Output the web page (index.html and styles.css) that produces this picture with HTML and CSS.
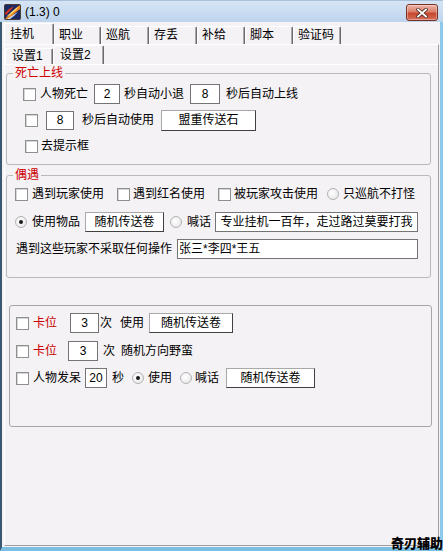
FILE: index.html
```html
<!DOCTYPE html>
<html lang="zh-CN">
<head>
<meta charset="utf-8">
<title>(1.3) 0</title>
<link rel="stylesheet" href="styles.css">
</head>
<body>
<div class="window">
  <div class="titlebar">
    <svg class="app-icon" width="17" height="16" viewBox="0 0 17 16">
      <rect x="0.5" y="0.5" width="16" height="15" rx="1" fill="#1b2a66" stroke="#4b3b30"/>
      <path d="M1 15 L7 9 L12 4 L16 1 L16 5 L11 9 L5 15 Z" fill="#f08a1a"/>
      <path d="M2 13 L8 7.5 L15 2 L12 6 L6 11 Z" fill="#ffe27a"/>
      <path d="M1 9 L5 5 L10 2 L7 6 L2 11 Z" fill="#d8321e"/>
      <path d="M3 15 L9 11 L14 8 L10 12 L6 15 Z" fill="#c9d8f0"/>
    </svg>
    <span class="title">(1.3) 0</span>
    <div class="close">
      <svg width="12" height="10" viewBox="0 0 12 10">
        <path d="M2 1.5 L10 8.5 M10 1.5 L2 8.5" stroke="#4a2a26" stroke-width="3.4" stroke-linecap="square"/>
        <path d="M2 1.5 L10 8.5 M10 1.5 L2 8.5" stroke="#ffffff" stroke-width="1.8" stroke-linecap="square"/>
      </svg>
    </div>
  </div>
  <div class="frame">
    <div class="tabs">
      <div class="tab active w50">挂机</div>
      <div class="tab w47">职业</div>
      <div class="tab w48">巡航</div>
      <div class="tab w48">存丢</div>
      <div class="tab w48">补给</div>
      <div class="tab w48">脚本</div>
      <div class="tab w48">验证码</div>
    </div>
    <div class="panel">
      <div class="subtabs">
        <div class="subtab w48">设置1</div>
        <div class="subtab active w51">设置2</div>
      </div>
      <div class="subpanel">
        <fieldset class="group g1">
          <legend>死亡上线</legend>
          <div class="row">
            <span class="cb ml16"></span>
            <span class="lbl ml4">人物死亡</span>
            <span class="edit w26 ml6">2</span>
            <span class="lbl ml4">秒自动小退</span>
            <span class="edit w30 ml6">8</span>
            <span class="lbl ml6">秒后自动上线</span>
          </div>
          <div class="row gap6">
            <span class="cb ml18"></span>
            <span class="edit w28 h19 ml8">8</span>
            <span class="lbl ml8">秒后自动使用</span>
            <span class="btn w95 h21 ml7">盟重传送石</span>
          </div>
          <div class="row gap6">
            <span class="cb ml18"></span>
            <span class="lbl ml3">去提示框</span>
          </div>
        </fieldset>

        <fieldset class="group g2">
          <legend>偶遇</legend>
          <div class="row">
            <span class="cb ml8"></span>
            <span class="lbl ml4">遇到玩家使用</span>
            <span class="cb ml13"></span>
            <span class="lbl ml3">遇到红名使用</span>
            <span class="cb ml13"></span>
            <span class="lbl ml3">被玩家攻击使用</span>
            <span class="rb ml9"></span>
            <span class="lbl ml4">只巡航不打怪</span>
          </div>
          <div class="row gap8">
            <span class="rb on ml8"></span>
            <span class="lbl ml5">使用物品</span>
            <span class="btn w79 ml5">随机传送卷</span>
            <span class="rb ml6"></span>
            <span class="lbl ml5">喊话</span>
            <span class="edit w203 ml4">专业挂机一百年，走过路过莫要打我</span>
          </div>
          <div class="row gap7">
            <span class="lbl ml9">遇到这些玩家不采取任何操作</span>
            <span class="edit left w241 ml5">张三*李四*王五</span>
          </div>
        </fieldset>

        <fieldset class="group g3">
          <div class="row">
            <span class="cb ml6"></span>
            <span class="lbl red ml4">卡位</span>
            <span class="edit w29 ml13">3</span>
            <span class="lbl ml1">次</span>
            <span class="lbl ml8">使用</span>
            <span class="btn w84 ml5">随机传送卷</span>
          </div>
          <div class="row gap8">
            <span class="cb ml6"></span>
            <span class="lbl red ml4">卡位</span>
            <span class="edit w30 ml11">3</span>
            <span class="lbl ml5">次</span>
            <span class="lbl ml6">随机方向野蛮</span>
          </div>
          <div class="row gap7">
            <span class="cb ml6"></span>
            <span class="lbl ml4">人物发呆</span>
            <span class="edit w22 ml4">20</span>
            <span class="lbl ml5">秒</span>
            <span class="rb on ml8"></span>
            <span class="lbl ml4">使用</span>
            <span class="rb ml8"></span>
            <span class="lbl ml3">喊话</span>
            <span class="btn w89 ml7">随机传送卷</span>
          </div>
        </fieldset>
      </div>
    </div>
  </div>
  <div class="brand">奇刃辅助</div>
</div>
</body>
</html>
```

FILE: styles.css
```css
* { box-sizing: border-box; }
html, body { margin: 0; padding: 0; }
body {
  width: 443px;
  height: 551px;
  overflow: hidden;
  font-family: "Liberation Sans", "Noto Sans CJK SC", sans-serif;
  font-size: 12px;
  color: #000;
  background: #f5f2f5;
}
.window {
  position: relative;
  width: 443px;
  height: 551px;
  display: flex;
  flex-direction: column;
}

/* title bar */
.titlebar {
  height: 22px;
  flex: none;
  display: flex;
  align-items: center;
  padding-left: 4px;
  background: linear-gradient(#d6e5f5, #bed4ed);
  border-top: 1px solid #a9c0d8;
}
.app-icon { flex: none; }
.title { margin-left: 4px; font-size: 12px; line-height: 14px; }
.close {
  margin-left: auto;
  margin-right: 5px;
  align-self: flex-start;
  margin-top: 3px;
  width: 32px;
  height: 17px;
  border: 1px solid #7a2f24;
  border-radius: 3px;
  background: linear-gradient(#eeb7a9, #da8069 45%, #c6472e 55%, #d4705a);
  box-shadow: inset 0 0 0 1px rgba(255, 255, 255, 0.35);
  display: flex;
  align-items: center;
  justify-content: center;
}

/* window frame */
.frame {
  flex: 1;
  display: flex;
  flex-direction: column;
  border-left: 2px solid #3a5870;
  border-right: 3px solid #8dc9ea;
  border-bottom: 4px solid #7dbfe3;
  padding-bottom: 1px;
  background: #f5f2f5;
}

/* main tabs */
.tabs {
  height: 22px;
  flex: none;
  display: flex;
  align-items: flex-end;
  padding-left: 2px;
}
.tab {
  height: 18px;
  flex: none;
  padding-left: 4px;
  line-height: 16px;
  white-space: nowrap;
  background: #f5f2f5;
  border-top: 1px solid #fff;
  border-left: 1px solid #fff;
  border-right: 1px solid #6a6a6a;
  border-radius: 2px 2px 0 0;
  box-shadow: inset -1px 0 0 #a9a9a9;
}
.tab.active {
  height: 22px;
  margin-bottom: -1px;
  padding-left: 5px;
  line-height: 21px;
}

.panel {
  flex: 1;
  display: flex;
  flex-direction: column;
  margin: 0 1px 0 2px;
  border: 1px solid;
  border-color: #fff #a0a0a0 #a0a0a0 #fff;
}

/* sub tabs */
.subtabs {
  height: 19px;
  flex: none;
  display: flex;
  align-items: flex-end;
}
.subtab {
  height: 16px;
  flex: none;
  padding-left: 6px;
  line-height: 15px;
  white-space: nowrap;
  background: #f5f2f5;
  border-top: 1px solid #fff;
  border-left: 1px solid #fff;
  border-right: 1px solid #6a6a6a;
  border-radius: 2px 2px 0 0;
  box-shadow: inset -1px 0 0 #a9a9a9;
}
.subtab.active {
  height: 20px;
  margin-bottom: -1px;
  line-height: 19px;
}
.subpanel {
  flex: 1;
  border-top: 1px solid #fff;
}

/* group boxes */
.group {
  min-width: 0;
  border: 1px solid #b9b9b9;
  border-radius: 3px;
  padding: 0;
}
.group legend {
  margin-left: 6px;
  padding: 0 2px;
  line-height: 14px;
  color: #cc0000;
}
.g1 { margin: 1px 7px 0 1px; padding: 4px 0 8px 0; }
.g2 { margin: 3px 7px 0 1px; padding: 2px 0 18px 0; }
.g3 { margin: 27px 6px 0 4px; padding: 7px 0 38px 0; border-color: #a6a6a6; }

.row {
  height: 20px;
  display: flex;
  align-items: center;
}
.gap6 { margin-top: 6px; }
.gap7 { margin-top: 7px; }
.gap8 { margin-top: 8px; }

.lbl { white-space: nowrap; line-height: 14px; flex: none; }
.red { color: #cc0000; }

.cb {
  width: 13px;
  height: 13px;
  flex: none;
  border: 1px solid #8e8f8f;
  background: #fff;
  box-shadow: inset 1px 1px 0 #d6d6d6;
}
.rb {
  width: 12px;
  height: 12px;
  flex: none;
  border-radius: 50%;
  border: 1px solid #b4b4b4;
  background: radial-gradient(circle at 40% 40%, #ffffff, #e2e2e2);
  display: flex;
  align-items: center;
  justify-content: center;
}
.rb.on::after {
  content: "";
  width: 4px;
  height: 4px;
  border-radius: 50%;
  background: #1a1a1a;
}
.edit {
  height: 20px;
  flex: none;
  background: #fff;
  border: 1px solid #747474;
  text-align: center;
  line-height: 18px;
  white-space: nowrap;
  overflow: hidden;
}
.edit.left { text-align: left; padding-left: 1px; }
.btn {
  height: 20px;
  flex: none;
  background: #fff;
  border: 1px solid;
  border-color: #a8a8a8 #404040 #404040 #a8a8a8;
  text-align: center;
  line-height: 18px;
  white-space: nowrap;
}
.h19 { height: 19px; line-height: 17px; }
.h21 { height: 21px; line-height: 19px; }

.brand {
  position: absolute;
  right: 0;
  bottom: 0;
  font-size: 13px;
  font-weight: 900;
  line-height: 15px;
  color: #000;
}

/* widths */
.w22 { width: 22px; } .w26 { width: 26px; } .w28 { width: 28px; }
.w29 { width: 29px; } .w30 { width: 30px; } .w47 { width: 47px; }
.w48 { width: 48px; } .w50 { width: 50px; } .w51 { width: 51px; }
.w79 { width: 79px; } .w84 { width: 84px; } .w89 { width: 89px; }
.w95 { width: 95px; } .w203 { width: 203px; } .w241 { width: 241px; }

/* left offsets */
.ml1 { margin-left: 1px; } .ml3 { margin-left: 3px; } .ml4 { margin-left: 4px; }
.ml5 { margin-left: 5px; } .ml6 { margin-left: 6px; } .ml7 { margin-left: 7px; }
.ml8 { margin-left: 8px; } .ml9 { margin-left: 9px; } .ml11 { margin-left: 11px; }
.ml13 { margin-left: 13px; } .ml16 { margin-left: 16px; } .ml18 { margin-left: 18px; }
```
